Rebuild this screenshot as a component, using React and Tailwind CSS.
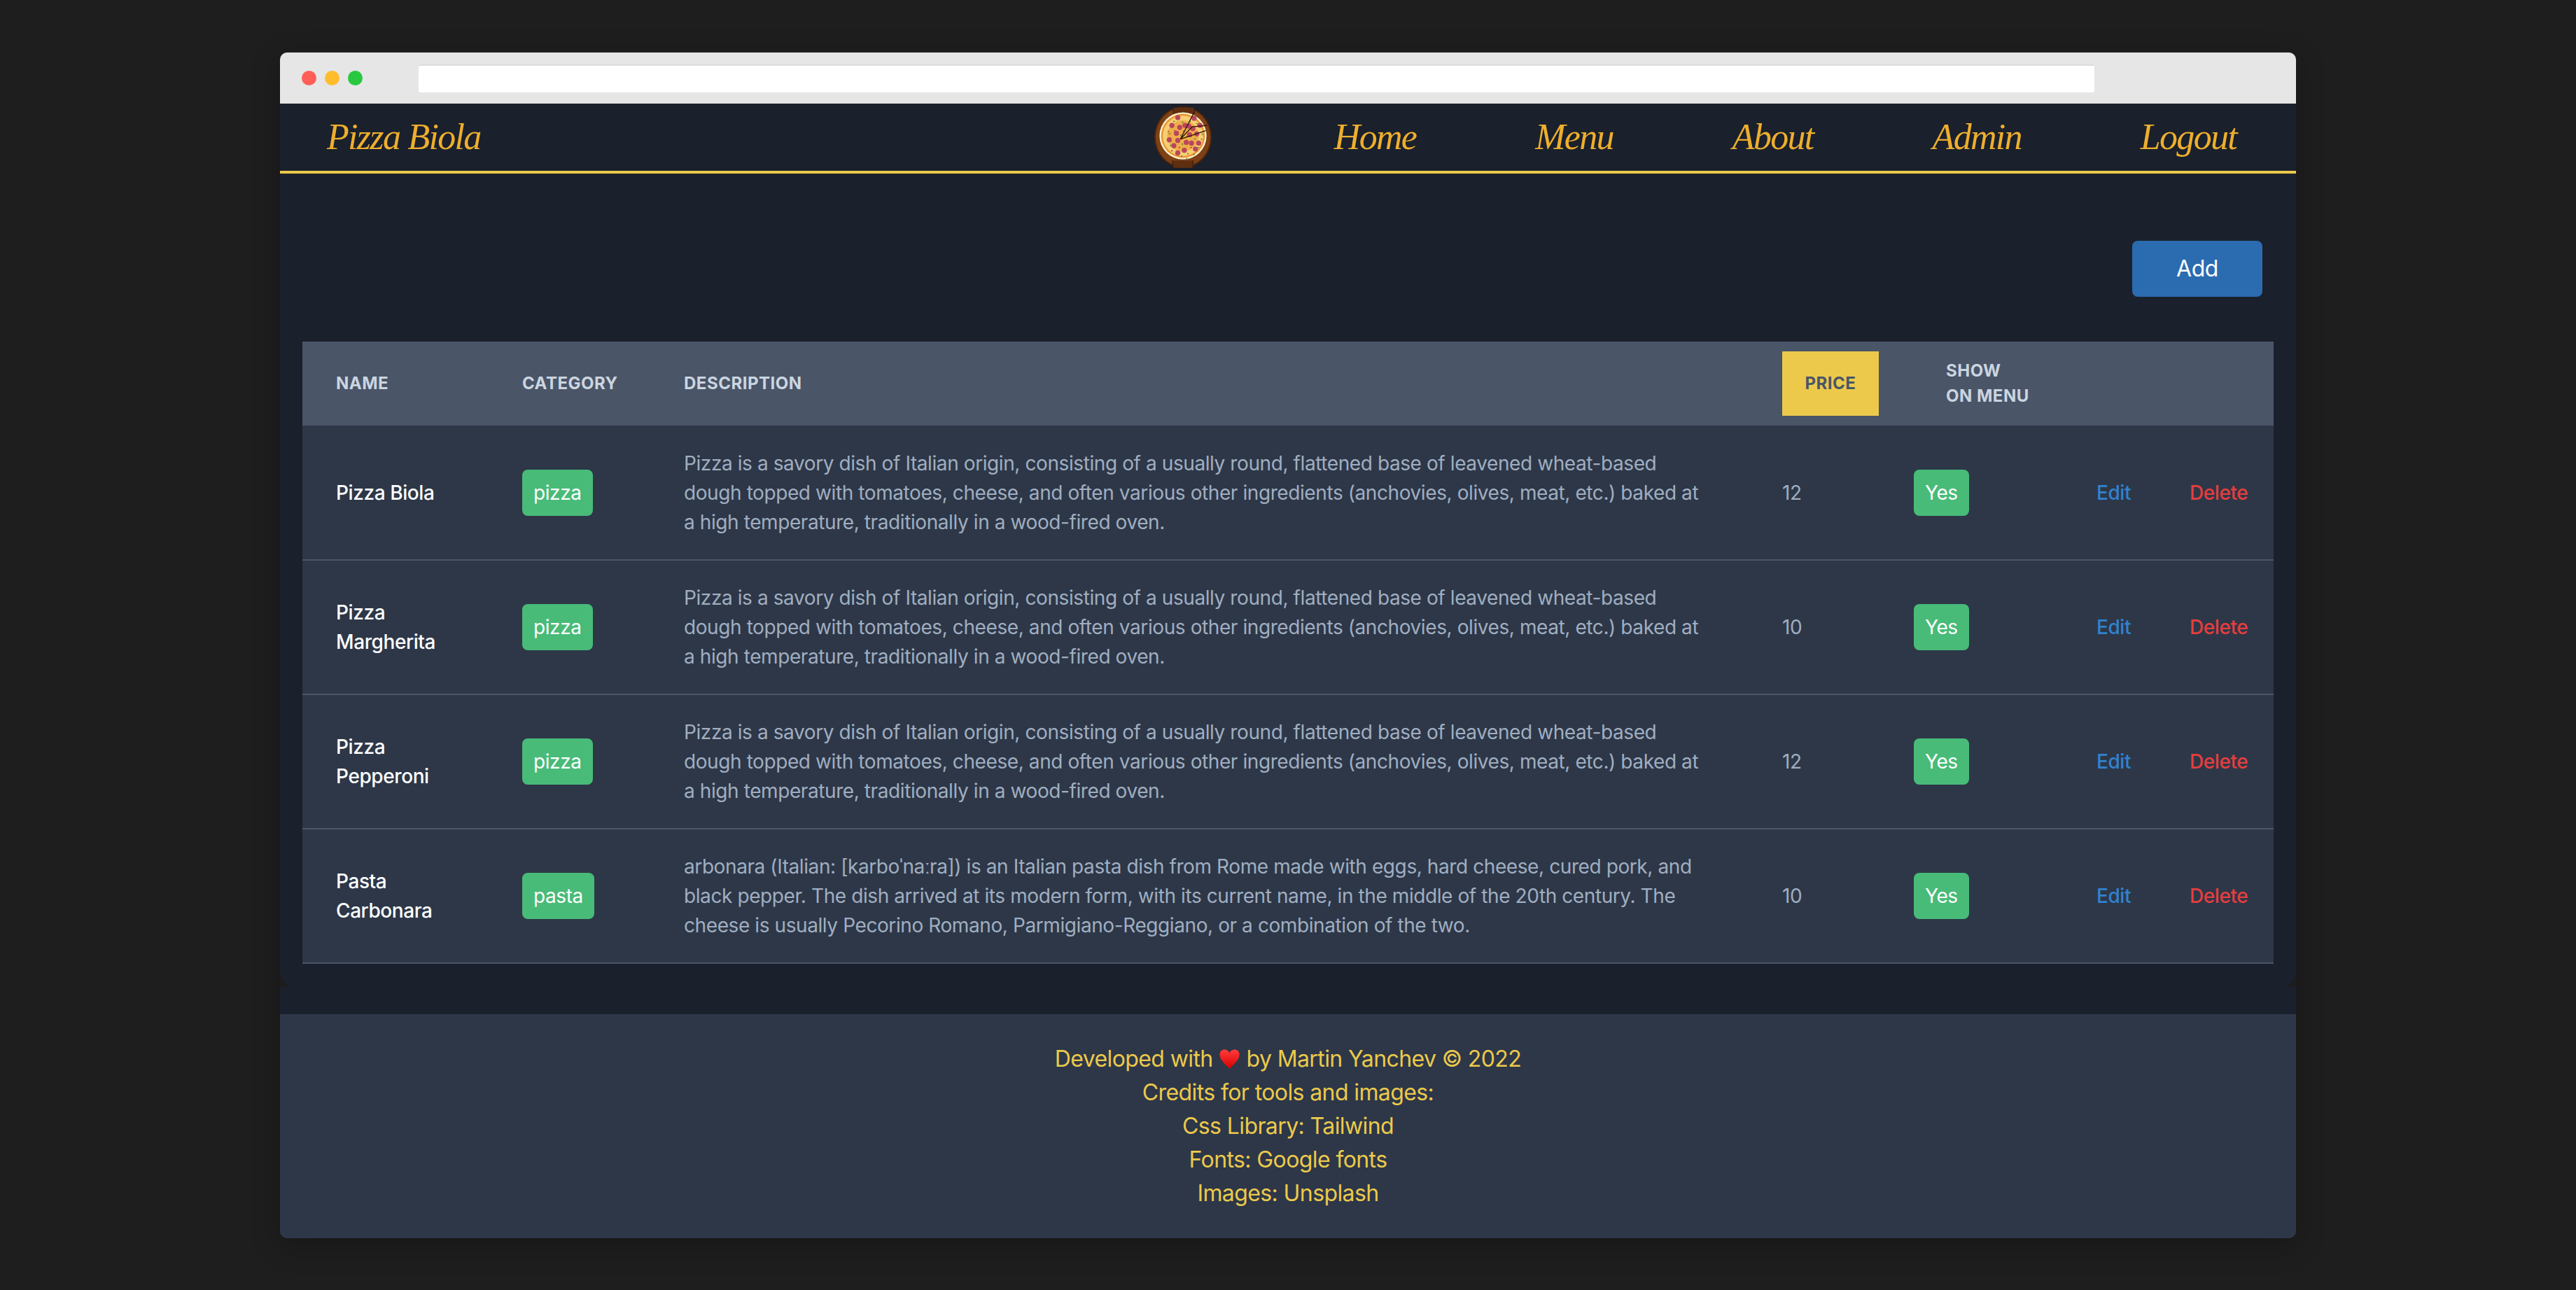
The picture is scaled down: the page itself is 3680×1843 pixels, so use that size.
import React from 'react';

const PIZZA_TEXT =
  'Pizza is a savory dish of Italian origin, consisting of a usually round, flattened base of leavened wheat-based dough topped with tomatoes, cheese, and often various other ingredients (anchovies, olives, meat, etc.) baked at a high temperature, traditionally in a wood-fired oven.';
const PASTA_TEXT =
  'arbonara (Italian: [karboˈnaːra]) is an Italian pasta dish from Rome made with eggs, hard cheese, cured pork, and black pepper. The dish arrived at its modern form, with its current name, in the middle of the 20th century. The cheese is usually Pecorino Romano, Parmigiano-Reggiano, or a combination of the two.';

const ITEMS = [
  { name: 'Pizza Biola', category: 'pizza', description: PIZZA_TEXT, price: 12 },
  { name: 'Pizza Margherita', category: 'pizza', description: PIZZA_TEXT, price: 10 },
  { name: 'Pizza Pepperoni', category: 'pizza', description: PIZZA_TEXT, price: 12 },
  { name: 'Pasta Carbonara', category: 'pasta', description: PASTA_TEXT, price: 10 },
];

const NAV_LINKS = ['Home', 'Menu', 'About', 'Admin', 'Logout'];

// pepperoni positions on the logo
const PEPPERONI = [
  [37, 18], [48, 30], [28, 30], [40, 33], [24, 52], [35, 42], [31, 61],
  [37, 53], [37, 72], [47, 68], [50, 56], [58, 57], [54, 31], [62, 19],
  [71, 30], [60, 35], [66, 43], [64, 66], [69, 57], [55, 44],
];
const HERBS = [
  [30, 23], [44, 24], [33, 37], [43, 44], [26, 43], [29, 70], [44, 60], [42, 78],
  [56, 64], [62, 50], [73, 50], [53, 72], [63, 74], [70, 64], [47, 40], [56, 25],
  [25, 62], [38, 64], [50, 46], [66, 26], [23, 38], [52, 80], [76, 44], [58, 48],
];

const PizzaLogo = () => (
  <svg viewBox="0 0 90 96" className="w-[84px] h-[90px]">
    <ellipse cx="45" cy="48" rx="44" ry="47" fill="#4e2409" />
    <ellipse cx="45" cy="48" rx="42" ry="45" fill="#7d4116" />
    <path d="M30 3 L62 3 L63 12 L30 12 Z M28 84 L62 84 L60 95 L30 95 Z" fill="#5f2e10" />
    <path d="M62 3 L63 12 M30 3 L30 12 M29 84 L30 95 M60 84 L60 95" stroke="#2e1405" strokeWidth="0.8" />
    <circle cx="45" cy="46" r="36" fill="#fff1cc" />
    <circle cx="45" cy="46" r="33.5" fill="#e8932e" />
    <circle cx="45" cy="46" r="31" fill="#f6cf74" />
    <circle cx="45" cy="46" r="24" fill="#efae4a" />
    {HERBS.map(([x, y], i) => (
      <rect key={i} x={x} y={y} width="2.4" height="1.4" fill={i % 3 === 2 ? '#8a3d12' : '#4f7a34'} transform={`rotate(${i * 40} ${x} ${y})`} />
    ))}
    {PEPPERONI.map(([x, y], i) => (
      <circle key={i} cx={x} cy={y} r="3.9" fill="#b9465e" />
    ))}
    {/* slice cuts */}
    <path d="M41 51 L62 10 M41 51 L80 38 M41 51 L59 32 L82 30" stroke="#2e1405" strokeWidth="1.5" fill="none" />
  </svg>
);

const Heart = () => (
  <svg viewBox="0 0 32 30" className="inline-block w-[31px] h-[30px] align-[-4px]">
    <defs>
      <linearGradient id="heartFill" x1="0" y1="0" x2="0" y2="1">
        <stop offset="0" stopColor="#ff3b3b" />
        <stop offset="1" stopColor="#d80000" />
      </linearGradient>
    </defs>
    <path
      d="M16 29.5 C11 23 1.5 17 1.5 8.5 C1.5 3.5 5 1 8.5 1 C11.5 1 14.8 2.8 16 6 C17.2 2.8 20.5 1 23.5 1 C27 1 30.5 3.5 30.5 8.5 C30.5 17 21 23 16 29.5 Z"
      fill="url(#heartFill)"
    />
  </svg>
);

const Badge = ({ children }) => (
  <span className="block w-fit bg-[#48bb78] text-white px-4 py-3 rounded-[8px] leading-[42px]">{children}</span>
);

const App = () => {
  return (
    <div className="min-h-[1843px] bg-[#1e1e1e] pt-[75px] font-['Inter',sans-serif]">
      <div className="w-[2880px] mx-auto rounded-[10px] overflow-hidden shadow-[0_10px_40px_rgba(0,0,0,0.25)]">
        {/* browser bar */}
        <div className="h-[73px] bg-[#e6e6e6] flex items-center pl-[31px]">
          <div className="flex gap-3">
            <span className="w-[21px] h-[21px] rounded-full bg-[#ff5f57]" />
            <span className="w-[21px] h-[21px] rounded-full bg-[#ffbd2e]" />
            <span className="w-[21px] h-[21px] rounded-full bg-[#28c940]" />
          </div>
          <div className="ml-[80px] w-[2394px] h-[40px] bg-white rounded-[3px] border-t-2 border-[#dcdcdc]" />
        </div>

        {/* nav */}
        <nav className="h-[100px] bg-[#1a202c] border-b-4 border-[#ecc94b] flex items-center pl-[67px] font-['Liberation_Serif',serif] italic text-[#eeae2d] text-[52px] tracking-[-1.7px]">
          <span>Pizza Biola</span>
          <div className="ml-auto flex items-center">
            <PizzaLogo />
            <div className="ml-[89px] flex">
              {NAV_LINKS.map((link) => (
                <a key={link} className="px-[85px]">
                  {link}
                </a>
              ))}
            </div>
          </div>
        </nav>

        {/* content */}
        <main className="bg-[#1a202c] px-8 pb-8 rounded-b-[20px] shadow-[0_6px_10px_rgba(0,0,0,0.1)]">
          <div className="flex justify-end pt-[96px] pb-16 pr-4">
            <button className="w-[186px] h-[80px] bg-[#2b6cb0] text-white text-[32px] tracking-[-0.5px] rounded-[8px]">Add</button>
          </div>

          <table className="w-[2816px] table-fixed border-collapse text-[28px] leading-[42px] tracking-[-0.41px]">
            <colgroup>
              <col className="w-[266px]" />
              <col className="w-[231px]" />
              <col className="w-[1569px]" />
              <col className="w-[188px]" />
              <col className="w-[261px]" />
              <col className="w-[133px]" />
              <col className="w-[168px]" />
            </colgroup>
            <thead>
              <tr className="bg-[#4a5568] text-[#cbd5e0] text-[24px] leading-[36px] uppercase tracking-[0.5px] text-left h-[120px]">
                <th className="pl-12 font-bold">Name</th>
                <th className="pl-12 font-bold">Category</th>
                <th className="pl-12 font-bold">Description</th>
                <th className="pl-12 font-bold">
                  <div className="w-[138px] h-[92px] bg-[#ecc94b] text-[#4a5568] flex items-center justify-center">Price</div>
                </th>
                <th className="pl-[94px] font-bold">
                  Show
                  <br />
                  on menu
                </th>
                <th />
                <th />
              </tr>
            </thead>
            <tbody>
              {ITEMS.map((item) => {
                const [first, second] = item.name.split(' ');
                return (
                  <tr key={item.name} className="bg-[#2d3748] border-b-2 border-[#4a5568] h-[192px]">
                    <td className="pl-12 pr-6 text-white font-medium">
                      {first === 'Pizza' && second === 'Biola' ? item.name : (
                        <>
                          {first}
                          <br />
                          {second}
                        </>
                      )}
                    </td>
                    <td className="pl-12">
                      <Badge>{item.category}</Badge>
                    </td>
                    <td className="pl-12 pr-[58px] py-8 text-[#a0aec0]">{item.description}</td>
                    <td className="pl-12 text-[#a0aec0]">{item.price}</td>
                    <td className="pl-12">
                      <Badge>Yes</Badge>
                    </td>
                    <td className="pl-12 text-[#3182ce] font-medium">Edit</td>
                    <td className="pl-12 text-[#e53e3e] font-medium">Delete</td>
                  </tr>
                );
              })}
            </tbody>
          </table>
        </main>

        {/* footer */}
        <div className="bg-[#1a202c] pt-10">
          <footer className="bg-[#2d3748] py-10 text-center text-[#ecc94b] text-[32px] leading-[48px] tracking-[-0.6px]">
            <p>
              Developed with <Heart /> by Martin Yanchev © 2022
            </p>
            <p>Credits for tools and images:</p>
            <p>Css Library: Tailwind</p>
            <p>Fonts: Google fonts</p>
            <p>Images: Unsplash</p>
          </footer>
        </div>
      </div>
    </div>
  );
};

export default App;
